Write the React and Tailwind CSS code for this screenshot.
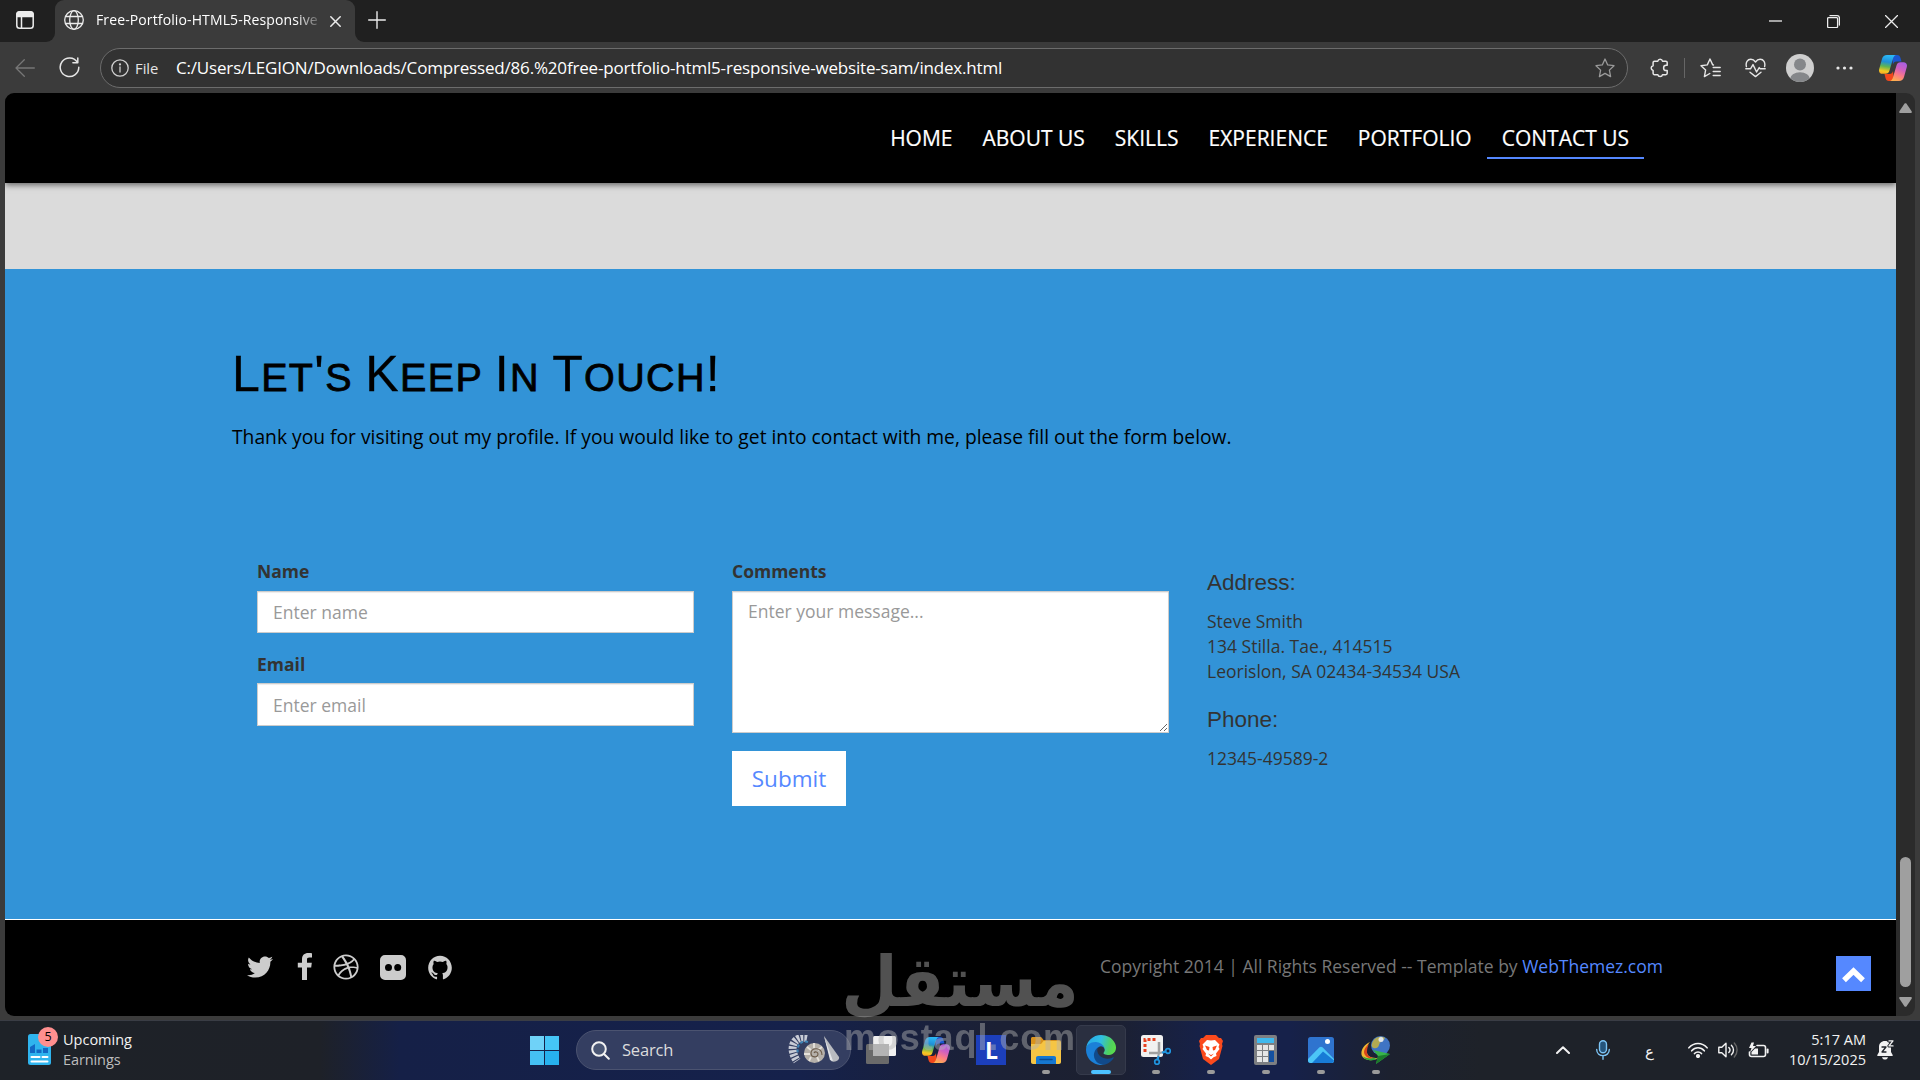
import React from "react";
import { FaTwitter, FaDribbble, FaFlickr } from "react-icons/fa";
import { IoLogoGithub } from "react-icons/io5";

const NAV = ["Home", "About Us", "Skills", "Experience", "Portfolio", "Contact Us"];

function Svg({ w, h = w, box, className = "", children, ...rest }) {
  return (
    <svg
      width={w}
      height={h}
      viewBox={box || `0 0 ${w} ${h}`}
      fill="none"
      stroke="currentColor"
      strokeWidth="1.3"
      strokeLinecap="round"
      strokeLinejoin="round"
      className={`block shrink-0 ${className}`}
      {...rest}
    >
      {children}
    </svg>
  );
}

function Copilot({ id, w = 28, h = 26 }) {
  return (
    <svg width={w} height={h} viewBox="0 0 28 26" className="block shrink-0">
      <defs>
        <linearGradient id={`${id}a`} x1="0.4" y1="0" x2="0.25" y2="1">
          <stop offset="0" stopColor="#2bb8f5" />
          <stop offset="0.35" stopColor="#1f8fd8" />
          <stop offset="0.6" stopColor="#5fb551" />
          <stop offset="0.85" stopColor="#f5c822" />
          <stop offset="1" stopColor="#f7a823" />
        </linearGradient>
        <linearGradient id={`${id}b`} x1="0.7" y1="0" x2="0.3" y2="1">
          <stop offset="0" stopColor="#a95fe0" />
          <stop offset="0.35" stopColor="#d060c0" />
          <stop offset="0.65" stopColor="#fb7a86" />
          <stop offset="1" stopColor="#fcb04e" />
        </linearGradient>
      </defs>
      <path d="M13 0h5c2 0 3 1.200 3.500 3l1 3.500h-5c-2 0-3 1-3.500 3z" fill="#1b56d0" />
      <path d="M15 26h-5c-2 0-3-1.200-3.500-3l-1-4h5c2 0 3-1 3.500-3z" fill="#f2481c" />
      <path d="M8 0h9c-1.800.6-2.500 2-3.100 4l-3.400 11.500c-.7 2.300-1.900 3.300-4 3.300H3.500C1 18.800-.5 17 .2 14L3 4C3.700 1.600 5.500 0 8 0z" fill={`url(#${id}a)`} />
      <path d="M20 26h-9c1.800-.6 2.500-2 3.100-4l3.400-11.500c.7-2.300 1.900-3.300 4-3.300h3c2.500 0 4 1.800 3.300 4.800L25 22c-.7 2.400-2.500 4-5 4z" fill={`url(#${id}b)`} />
    </svg>
  );
}

function TabBar() {
  return (
    <div className="flex h-[42px] shrink-0 items-end bg-[#202020] text-[#ececec]">
      <div className="flex h-[42px] w-[55px] items-center bg-[#3b3b3b]">
        <div className="flex h-full w-full items-center rounded-br-[9px] bg-[#202020] pb-[2px] pl-4">
          <Svg w={18} strokeWidth="1.5">
            <rect x="0.800" y="0.800" width="16.400" height="16.400" rx="2.800" />
            <path d="M1 3.600C1 2 2 1 3.600 1h10.800C16 1 17 2 17 3.600V5.400H1z" fill="currentColor" />
            <path d="M5.500 5v12" />
          </Svg>
        </div>
      </div>
      <div className="flex h-[42px] w-[300px] items-center rounded-t-[9px] bg-[#3b3b3b] pb-[2px] pl-[9px]">
        <Svg w={20}>
          <circle cx="10" cy="10" r="9.300" />
          <ellipse cx="10" cy="10" rx="4.300" ry="9.300" />
          <path d="M1.600 6.500h16.800M1.600 13.500h16.800" />
        </Svg>
        <div className="ml-[12px] w-[226px] overflow-hidden whitespace-nowrap text-[14px] leading-5 tracking-[0.12px] text-white [mask-image:linear-gradient(to_right,black_200px,transparent_228px)]">
          Free-Portfolio-HTML5-Responsive
        </div>
        <Svg w={11} className="ml-[8px] mt-[2px]" strokeWidth="1.5">
          <path d="M0.800 0.800l9.400 9.400M10.200 0.800l-9.400 9.400" />
        </Svg>
      </div>
      <div className="flex h-[42px] flex-1 items-center bg-[#3b3b3b]">
        <div className="flex h-full w-full items-center rounded-bl-[9px] bg-[#202020] pb-[3px]">
          <Svg w={18} className="ml-[13px]" strokeWidth="1.4">
            <path d="M9 0.700v16.600M0.700 9h16.600" />
          </Svg>
          <div className="ml-auto flex items-center gap-[45px] pr-[22px] pt-[3px]">
            <Svg w={13}>
              <path d="M0 6h13" strokeLinecap="butt" />
            </Svg>
            <Svg w={13}>
              <rect x="0.600" y="2.600" width="10" height="10" rx="1" />
              <path d="M3 0.700h7.200c1.300 0 2.200.9 2.200 2.200V10" />
            </Svg>
            <Svg w={13}>
              <path d="M0.500 0.500l12 12M12.500 0.500l-12 12" />
            </Svg>
          </div>
        </div>
      </div>
    </div>
  );
}

const STAR = "M10 1l2.700 5.900 6.300.8-4.600 4.400 1.200 6.500L10 15.400l-5.600 3.200 1.200-6.500L1 7.700l6.300-.8z";

function Toolbar() {
  return (
    <div className="flex h-[51px] shrink-0 items-center bg-[#3b3b3b] text-[#e6e6e6]">
      <Svg w={20} h={18} className="ml-[15px] text-[#777]">
        <path d="M19.300 9H1M9.300 0.800L1 9l8.300 8.200" />
      </Svg>
      <Svg w={21} className="ml-[24px] mr-px" strokeWidth="1.5">
        <path d="M18.300 5.200A9.300 9.300 0 1 0 19.800 10.300" />
        <path d="M18.800 0.900v4.900h-4.900" />
      </Svg>
      <div className="ml-[19px] flex h-10 w-[1528px] items-center rounded-full border border-[#6c6c6c] bg-[#323232] pl-[10px]">
        <Svg w={18} className="text-[#d0d0d0]">
          <circle cx="9" cy="9" r="8.200" />
          <path d="M9 8v5" />
          <circle cx="9" cy="5.400" r="0.500" fill="currentColor" />
        </Svg>
        <span className="ml-[6px] w-[41px] text-[14.800px] leading-5 text-[#e4e4e4]">File</span>
        <span className="whitespace-nowrap text-[17px] leading-6 tracking-[-0.18px] text-white">
          C:/Users/LEGION/Downloads/Compressed/86.%20free-portfolio-html5-responsive-website-sam/index.html
        </span>
        <Svg w={20} className="ml-auto mr-3 text-[#9a9a9a]">
          <path d={STAR} />
        </Svg>
      </div>
      <Svg w={19} h={20} className="ml-[22px]" strokeWidth="1.500">
        <path d="M4.500 3.200h3.300a2.400 2.400 0 0 1 4.700 0h3.300c.8 0 1.400.6 1.400 1.400v2.700h-1a2.600 2.600 0 0 0 0 5.200h1v2.800c0 .8-.6 1.400-1.400 1.400h-3.300a2.400 2.400 0 0 1-4.700 0H4.500c-.8 0-1.400-.6-1.400-1.400v-2.900a2.400 2.400 0 0 1 0-4.700V4.600c0-.8.6-1.400 1.400-1.400z" />
      </Svg>
      <div className="ml-[15px] h-5 w-px bg-[#666]" />
      <Svg w={21} h={20} className="ml-[15px]" strokeWidth="1.400">
        <path d="M13.500 7L12.700 6.900 10 1 7.300 6.900 1 7.700l4.600 4.400-1.200 6.500L9.800 15.500" />
        <path d="M13.200 9.500h7M13.200 13.500h7M13.200 17.500h7" />
      </Svg>
      <Svg w={21} h={20} className="ml-[24px]" strokeWidth="1.400">
        <path d="M1.400 8.600C.4 4.500 2.500 1.300 5.800 1.300c2 0 3.500 1 4.700 2.700 1.200-1.700 2.700-2.700 4.700-2.700 3.300 0 5.400 3.200 4.400 7.300" />
        <path d="M0.800 10.800h4.700L8 6.600l3.600 7.400 2.600-4.400 1 1.200h5" />
        <path d="M5 14.200l5.500 4.400 5.500-4.400" />
      </Svg>
      <Svg w={28} className="ml-[20px]" stroke="none">
        <defs>
          <clipPath id="avatar"><circle cx="14" cy="14" r="14" /></clipPath>
        </defs>
        <circle cx="14" cy="14" r="14" fill="#cfcfcf" />
        <g clipPath="url(#avatar)" fill="#85878a">
          <circle cx="14" cy="10.500" r="6" />
          <ellipse cx="14" cy="25" rx="10" ry="6.800" />
        </g>
      </Svg>
      <Svg w={17} h={4} className="ml-[22px]" stroke="none">
        <g fill="#e6e6e6">
          <circle cx="2" cy="2" r="1.600" />
          <circle cx="8.500" cy="2" r="1.600" />
          <circle cx="15" cy="2" r="1.600" />
        </g>
      </Svg>
      <div className="ml-[26px]"><Copilot id="cpA" /></div>
    </div>
  );
}

function SiteHeader() {
  return (
    <header className="relative z-10 flex h-[90px] shrink-0 items-start justify-end bg-black pr-[252px] pt-[30px] shadow-[0_2px_6px_rgba(0,0,0,0.55)]">
      {NAV.map((label) => (
        <a
          key={label}
          className={`border-b-2 px-[15px] pb-[4px] text-[21px] uppercase leading-[30px] text-white [-webkit-text-stroke:0.2px_white] ${
            label === "Contact Us" ? "border-[#5588ff]" : "border-transparent"
          }`}
        >
          {label}
        </a>
      ))}
    </header>
  );
}

const CAPS = [["L", "et"], ["'", "s "], ["K", "eep "], ["I", "n "], ["T", "ouch"], ["!", ""]];
const FIELD =
  "block w-[437px] border border-[#ccc] bg-white px-[15px] text-[17.500px] leading-[25px] text-[#999] placeholder-[#999] outline-none shadow-[inset_0_1px_1px_rgba(0,0,0,0.075)]";

function Contact() {
  return (
    <section className="h-[650px] shrink-0 bg-[#3293d7] pl-[226px] pt-[78px] text-[17.500px] leading-[25px] text-[#333]">
      <h1 className="whitespace-pre pl-px font-['Liberation_Sans',Arial,sans-serif] text-[50px] uppercase leading-[55px] tracking-[1.350px] text-black [-webkit-text-stroke:0.3px_black]">
        {CAPS.map(([big, small]) => (
          <React.Fragment key={big}>
            {big}
            <span className="text-[39.500px] leading-none [-webkit-text-stroke:0.8px_black]">{small}</span>
          </React.Fragment>
        ))}
      </h1>
      <p className="mt-[21px] pl-px text-[19.250px] leading-[28px] text-black">
        Thank you for visiting out my profile. If you would like to get into contact with me, please fill out the form below.
      </p>
      <div className="mt-[108px] flex gap-[38px] pl-[26px]">
        <div>
          <label className="block font-bold">Name</label>
          <input className={`${FIELD} mt-[7px] h-[42px]`} placeholder="Enter name" />
          <label className="mt-[19px] block font-bold">Email</label>
          <input className={`${FIELD} mt-[6px] h-[43px]`} placeholder="Enter email" />
        </div>
        <div>
          <label className="block font-bold">Comments</label>
          <textarea className={`${FIELD} mt-[7px] h-[142px] resize-y py-[7px]`} placeholder="Enter your message..." />
          <button className="mt-[18px] block h-[55px] w-[114px] bg-white text-[22.500px] text-[#5588ff]">Submit</button>
        </div>
        <div className="pt-[11px]">
          <h3 className="font-['Liberation_Sans',Arial,sans-serif] text-[22.500px]">Address:</h3>
          <p className="mt-[14px]">
            Steve Smith
            <br />
            134 Stilla. Tae., 414515
            <br />
            Leorislon, SA 02434-34534 USA
          </p>
          <h3 className="mt-[23px] font-['Liberation_Sans',Arial,sans-serif] text-[22.500px]">Phone:</h3>
          <p className="mt-[14px]">12345-49589-2</p>
        </div>
      </div>
    </section>
  );
}

function Footer() {
  return (
    <footer className="relative flex h-[97px] shrink-0 items-start border-t border-white bg-black text-[17.500px] leading-[25px]">
      <div className="ml-[242px] mt-[33px] flex h-[28px] items-center text-[#ccc]">
        <FaTwitter className="h-[26px] w-[26px]" />
        <svg viewBox="0 0 15 27" className="mb-[2px] ml-[24px] h-[27px] w-[15px]" fill="currentColor">
          <path d="M15 .2v4.300h-2.600C10.400 4.500 10 5.400 10 6.800v3h4.800l-.6 4.700H10V27H5V14.500H.8V9.800H5V6.200C5 2.200 7.500 0 11.200 0c1.700 0 3.300.1 3.800.2z" />
        </svg>
        <FaDribbble className="ml-[21px] h-[26px] w-[26px]" />
        <svg viewBox="0 0 26 25" className="ml-[21px] h-[25px] w-[26px]" fill="currentColor" fillRule="evenodd">
          <path d="M5 0h16a5 5 0 0 1 5 5v15a5 5 0 0 1-5 5H5a5 5 0 0 1-5-5V5a5 5 0 0 1 5-5zM8.500 9a3.500 3.500 0 1 0 0 7 3.500 3.500 0 0 0 0-7zM17.700 9a3.500 3.500 0 1 0 0 7 3.500 3.500 0 0 0 0-7z" />
        </svg>
        <IoLogoGithub className="ml-[20px] h-[27px] w-[28px]" />
      </div>
      <p className="ml-auto mr-[233px] mt-[34px] whitespace-pre text-[#777]">
        Copyright 2014 | All Rights Reserved -- Template by <a className="text-[#5588ff]">WebThemez.com</a>
      </p>
      <a className="absolute right-[25px] top-[36px] flex h-[35px] w-[35px] items-center justify-center bg-[#5588ff] pt-[2px]">
        <svg width="23" height="16" viewBox="0 0 23 16" className="block">
          <path d="M2 13.300l9.500-9.300 9.500 9.300" stroke="#fff" strokeWidth="5.400" fill="none" />
        </svg>
      </a>
    </footer>
  );
}

function Scrollbar() {
  return (
    <div className="flex w-[19px] flex-col items-center rounded-r-[9px] bg-[#2b2b2b] pt-[10px] text-[#9f9f9f]">
      <Svg w={13} h={10} stroke="none">
        <path d="M5.600.6c.5-.6 1.300-.6 1.800 0l5.200 7.600c.5.900.1 1.800-.9 1.800H1.300C.3 10-.1 9.100.4 8.200z" fill="#9f9f9f" />
      </Svg>
      <div className="mt-auto h-[130px] w-[11px] rounded-full bg-[#9f9f9f]" />
      <Svg w={13} h={10} stroke="none" className="mb-[9px] mt-[10px]">
        <path d="M5.600 9.400c.5.600 1.300.6 1.800 0l5.200-7.600C13.100.9 12.700 0 11.700 0H1.300C.3 0-.1.900.4 1.800z" fill="#9f9f9f" />
      </Svg>
    </div>
  );
}

function Widgets() {
  return (
    <div className="relative">
      <svg width="23" height="31" viewBox="0 0 23 31" className="block">
        <rect width="23" height="31" rx="2.500" fill="#2fb4ee" />
        <path d="M2 13l5-3v9H2zM8.500 15.500h5V19h-5zM15 14h5v5h-5z" fill="#1268c4" />
        <path d="M3.500 23h8M14.500 23h5M3.500 27.500h16" stroke="#fff" strokeWidth="2" strokeLinecap="round" />
      </svg>
      <div className="absolute -right-[7px] -top-[7px] flex h-[20px] w-[20px] items-center justify-center rounded-full bg-[#ff8f8f] text-[12.500px] leading-none text-black">
        5
      </div>
    </div>
  );
}

function SeaShells() {
  return (
    <svg width="54" height="30" viewBox="0 0 54 30" className="block">
      <path d="M20 3C10 1 4 8 6 17c.6 3 2 6 4 9" stroke="#c8ccd6" strokeWidth="8" strokeDasharray="2.600 1.100" fill="none" />
      <path d="M21 7C14 5 9 10 11 19" stroke="#3f83b5" strokeWidth="2" strokeDasharray="3 2" fill="none" />
      <ellipse cx="27.500" cy="18" rx="10.500" ry="10" fill="#b5b0aa" />
      <path d="M20 12l4 3M27 8v5M35 12l-4 3M17 19h6M22 26l2-4M32 26l-2-4" stroke="#e6e2dc" strokeWidth="1.800" />
      <path d="M27 18c1-2 4-1 4 1 0 4-7 4-7-1 0-6 11-6 11 2" stroke="#6b5a48" strokeWidth="1.100" fill="none" />
      <path d="M37 1l15 21c1 3-4 6-8 4z" fill="#b9bbc0" />
      <path d="M37 1l9 25-3-1z" fill="#e4e5e8" />
    </svg>
  );
}

function EdgeIcon() {
  return (
    <svg width="30" height="30" viewBox="4.600 4.900 256 256" className="block">
      <defs>
        <linearGradient id="edgeTop" x1="0" y1="0.400" x2="1" y2="0.600">
          <stop offset="0" stopColor="#27a9e8" />
          <stop offset="0.450" stopColor="#30bfe3" />
          <stop offset="0.800" stopColor="#4fd060" />
          <stop offset="1" stopColor="#5bdc4a" />
        </linearGradient>
      </defs>
      <path d="M235.680 195.460a93.730 93.730 0 0 1-10.540 4.710 101.870 101.870 0 0 1-35.900 6.460c-47.320 0-88.540-32.550-88.540-74.320A31.480 31.480 0 0 1 117.130 105c-42.800 1.800-53.800 46.400-53.800 72.530 0 73.880 68.090 81.370 82.760 81.370 7.910 0 19.840-2.300 27-4.560l1.310-.44a128.340 128.340 0 0 0 66.600-52.800 4 4 0 0 0-5.320-5.640z" fill="#114a8b" />
      <path d="M110.340 246.340A79.200 79.200 0 0 1 87.600 225a80.720 80.720 0 0 1 29.530-120c3.120-1.470 8.450-4.130 15.540-4a32.350 32.350 0 0 1 25.690 13 31.880 31.880 0 0 1 6.360 18.660c0-.21 24.460-79.600-80-79.600-43.900 0-80 41.660-80 78.210a130.150 130.150 0 0 0 12.110 56 128 128 0 0 0 156.380 67.110 75.550 75.550 0 0 1-62.780-8z" fill="#1b80d8" />
      <path d="M156.940 153.780c-.81 1.050-3.300 2.500-3.300 5.660 0 2.610 1.700 5.120 4.720 7.230 14.380 10 41.490 8.680 41.560 8.680a59.560 59.560 0 0 0 30.270-8.350 61.380 61.380 0 0 0 30.430-52.880c.26-22.410-8-37.310-11.340-43.910C228.090 28.760 182.350 4.920 132.610 4.920a128 128 0 0 0-128 126.200c.48-36.540 36.800-66.050 80-66.050 3.500 0 23.460.34 42 10.070 16.340 8.580 24.900 18.940 30.850 29.210 6.180 10.670 7.280 24.150 7.280 29.520s-2.740 13.330-7.800 19.910z" fill="url(#edgeTop)" />
    </svg>
  );
}

const TASKS = [
  {
    icon: (
      <svg width="30" height="28" viewBox="0 0 30 28" className="block">
        <rect x="0" y="8" width="23" height="20" rx="1.500" fill="#6a6a6a" />
        <rect x="7" y="0" width="23" height="20" rx="1.500" fill="#f0f0f0" />
        <rect x="7" y="8" width="16" height="12" fill="#b4b4b4" />
      </svg>
    ),
  },
  { icon: <Copilot id="cpB" /> },
  {
    icon: (
      <div className="flex h-[30px] w-[30px] items-center justify-center bg-[#1c3fbb] pl-[2px] text-[23px] font-bold leading-none text-white">
        L
      </div>
    ),
  },
  {
    open: true,
    icon: (
      <svg width="30" height="27" viewBox="0 0 30 27" className="block">
        <path d="M0 1.500C0 .7.700 0 1.500 0H9c1 0 1.500.3 2 1l1.500 2H28c1.200 0 2 .8 2 2v6H0z" fill="#d9931e" />
        <path d="M0 7h10l2.500-3H28c1.200 0 2 .8 2 2v19c0 1.200-.8 2-2 2H2c-1.200 0-2-.8-2-2z" fill="#f6c544" />
        <path d="M5 27v-6c0-1.200.8-2 2-2h16c1.200 0 2 .8 2 2v6z" fill="#1678d2" />
        <path d="M9 22.500h12" stroke="#0c4b93" strokeWidth="1.500" strokeLinecap="round" />
      </svg>
    ),
  },
  { active: true, icon: <EdgeIcon /> },
  {
    open: true,
    icon: (
      <svg width="30" height="30" viewBox="0 0 30 30" className="block">
        <rect width="22" height="22" rx="2.500" fill="#f1f1f1" />
        <path d="M4 17V4.500h12.500" stroke="#e8401f" strokeWidth="3" strokeDasharray="3 2" fill="none" />
        <path d="M18 7v12M8 18h11" stroke="#a0a0a0" strokeWidth="2.500" />
        <path d="M18 18l-1.500 6M19 18l5-1.500" stroke="#9aa0a6" strokeWidth="2" />
        <circle cx="16" cy="27" r="2.300" stroke="#1f95e0" strokeWidth="1.700" fill="none" />
        <circle cx="27" cy="16" r="2.300" stroke="#1f95e0" strokeWidth="1.700" fill="none" />
        <path d="M16.500 25l1.200-4M25 16.500l-4 1.200" stroke="#1f95e0" strokeWidth="2" />
      </svg>
    ),
  },
  {
    open: true,
    icon: (
      <svg width="26" height="30" viewBox="0 0 26 30" className="block">
        <path d="M8 0h10l3 3h2l2 3-1 3 .5 2-3.500 13-8 6-8-6L1.500 11 2 9 1 6l2-3h2z" fill="#fb4a1d" />
        <path d="M13 5.500l4-.6 4.500 4.600-1 2.500 1 2-3.500 4.500.5 2.500-3 1.200L13 24.500l-2.500-2.300-3-1.200.5-2.500L4.500 14l1-2-1-2.500L9 4.900z" fill="#fff" />
        <path d="M7 10.500l4.500 1.500-.5 3.500-2-.5zM19 10.500L14.500 12l.5 3.500 2-.5zM10 18.500l3 1.500 3-1.500-3 3z" fill="#fb4a1d" />
      </svg>
    ),
  },
  {
    open: true,
    icon: (
      <svg width="23" height="30" viewBox="0 0 23 30" className="block">
        <rect width="23" height="30" rx="2" fill="#7d7f82" />
        <rect x="3" y="3" width="17" height="5" fill="#3fb9ee" />
        <g fill="#e6e6e6">
          <rect x="3" y="10" width="5" height="5" /><rect x="9" y="10" width="5" height="5" /><rect x="15" y="10" width="5" height="5" />
          <rect x="3" y="16" width="5" height="5" /><rect x="9" y="16" width="5" height="5" />
          <rect x="3" y="22" width="5" height="5" /><rect x="9" y="22" width="5" height="5" />
        </g>
        <rect x="15" y="16" width="5" height="11" fill="#1450a0" />
      </svg>
    ),
  },
  {
    open: true,
    icon: (
      <svg width="26" height="26" viewBox="0 0 26 26" className="block">
        <rect width="26" height="26" rx="2.500" fill="#2f74cf" />
        <path d="M0 22L11.500 10.300c.9-.9 2.100-.9 3 0L26 22v1.500c0 1.500-1 2.500-2.500 2.500h-21C1 26 0 25 0 23.500z" fill="#4cc6f7" />
        <path d="M4 26l11-11.500 11 9c0 1.500-1 2.500-2.500 2.500z" fill="#187bd6" />
        <circle cx="19.500" cy="4.500" r="2.500" fill="#fff" />
      </svg>
    ),
  },
  {
    open: true,
    icon: (
      <svg width="30" height="28" viewBox="0 0 30 28" className="block">
        <circle cx="19.500" cy="9.500" r="9.500" fill="#3f74c4" />
        <path d="M12 5c3-5 9-5 12-3-2 4-5 3-6 7s-5 4-7 2c-.8-2 0-4 1-6z" fill="#b3aa52" />
        <circle cx="20" cy="3.500" r="2.500" fill="#dfe6ee" />
        <path d="M9 6C2 9-1 16 1 20s9 6 16 2c-6 0-10-1-11-5s0-8 3-11z" fill="#f2b632" />
        <path d="M8 8C3 12 2 16 4 19s6 4 9 3.500C8 21 6 19 6 16s.5-5 2-8z" fill="#d8441c" />
        <path d="M1 20c3 4 9 6 15 3l-3-1c-4 1-9 0-12-2z" fill="#2da83b" />
        <path d="M12 14l17 4-14 10 2-8z" fill="#37b54a" />
        <path d="M17 20l12-2-14 10z" fill="#1c7a2b" />
      </svg>
    ),
  },
];

function Taskbar() {
  return (
    <div className="flex h-[60px] w-full shrink-0 items-center border-t border-[#3a3d45] bg-[linear-gradient(to_right,#1e2228_0,#1e2128_320px,#152047_400px,#15214b_800px,#1b2034_1000px,#1c2030_1110px,#16214a_1210px,#16214a_1290px,#1c212f_1390px,#1e2229_1480px)] pb-px text-[#f2f2f2]">
      <div className="ml-[28px] mt-[-1px]"><Widgets /></div>
      <div className="ml-[12px] w-[467px] text-[14.500px] leading-[20px]">
        <div>Upcoming</div>
        <div className="tracking-[-0.100px] text-[#bdbdbd]">Earnings</div>
      </div>
      <div className="grid w-[29px] grid-cols-2 gap-px">
        <div className="h-[14px] bg-[#6fd2f8]" />
        <div className="h-[14px] bg-[#45c5f7]" />
        <div className="h-[14px] bg-[#45c0f3]" />
        <div className="h-[14px] bg-[#27b1ee]" />
      </div>
      <div className="ml-[17px] flex h-10 w-[275px] items-center rounded-full border border-[#4b5370] bg-[#343e61] pl-[14px]">
        <Svg w={19} strokeWidth="2">
          <circle cx="8" cy="8" r="6.800" fill="#4a5674" />
          <path d="M13 13l4.800 4.800" />
        </Svg>
        <span className="ml-3 text-[16.500px] leading-6 tracking-[-0.200px] text-[#dcdcdc]">Search</span>
        <div className="ml-auto mr-[9px]"><SeaShells /></div>
      </div>
      <div className="ml-[2px] flex">
        {TASKS.map((t, i) => (
          <div key={i} className="flex w-[55px] justify-center">
            <div
              className={`relative flex h-[50px] w-[50px] items-center justify-center rounded-[5px] ${
                t.active ? "border border-[#353a4b] bg-[#2a2f40]" : ""
              }`}
            >
              {t.icon}
              {t.active && <div className="absolute bottom-0 h-1 w-5 rounded-full bg-[#4cc2ff]" />}
              {t.open && <div className="absolute bottom-[1px] h-1 w-2 rounded-full bg-[#9a9a9a]" />}
            </div>
          </div>
        ))}
      </div>
      <Svg w={14} h={8} className="ml-[153px]" strokeWidth="2">
        <path d="M1 7l6-5.800L13 7" />
      </Svg>
      <Svg w={14} h={20} className="ml-[26px] text-[#7cc4f5]" strokeWidth="1.400">
        <rect x="3.500" y="0.700" width="7" height="12" rx="3.500" fill="#25557c" />
        <path d="M0.700 9.500c0 8.200 12.600 8.200 12.600 0M7 15.800v3.500" />
      </Svg>
      <span className="ml-[35px] mt-[4px] w-[11px] font-['DejaVu_Sans',sans-serif] text-[15px] leading-5">ع</span>
      <Svg w={20} h={16} className="ml-[32px]" strokeWidth="1.600">
        <path d="M0.900 5.800c5-5.700 13.200-5.700 18.200 0M3.700 8.800c3.500-4 9.100-4 12.600 0M6.500 11.600c1.900-2.200 5.100-2.200 7 0" />
        <circle cx="10" cy="14" r="1.300" fill="currentColor" />
      </Svg>
      <Svg w={20} h={16} className="ml-[10px]" strokeWidth="1.400">
        <path d="M0.800 5.300h3L8 1.200v13.600l-4.200-4.100h-3z" />
        <path d="M10.800 5.500c1.400 1.400 1.400 3.600 0 5M13.400 3.200c2.800 2.800 2.800 6.800 0 9.600" />
        <path d="M16.300 1c3.700 4 3.700 10 0 14" stroke="#666" />
      </Svg>
      <Svg w={21} h={17} className="ml-[10px]" strokeWidth="1.600">
        <path d="M9 3.500h6.500c1.300 0 2 .7 2 2v7c0 1.300-.7 2-2 2h-12c-1.300 0-2-.7-2-2V10" />
        <path d="M19.600 7.500v3" strokeWidth="2" />
        <path d="M7 6.500h3v6H3.500V10z" fill="currentColor" stroke="none" />
        <path d="M3.500 0.500L1 6h2.500L2 10.500 8 4H5l1-3.500z" fill="currentColor" stroke="none" />
      </Svg>
      <div className="ml-auto mr-[11px] text-right text-[14.500px] leading-[20px]">
        <div>5:17 AM</div>
        <div>10/15/2025</div>
      </div>
      <Svg w={17} h={20} className="mr-[26px]" stroke="none">
        <path d="M8 1C4.300 1 2 3.500 2 7v5L.3 15c-.2.600.1 1 .7 1h14c.6 0 .9-.4.700-1L14 12V7c0-3.500-2.300-6-6-6zM5 17.200h6c-.4 1.500-1.500 2.400-3 2.400s-2.600-.9-3-2.400z" fill="#f2f2f2" />
        <path d="M5 7h4l-4 5h4" stroke="#1e2229" strokeWidth="1.300" />
        <path d="M12 0.900h4l-4 5h4" stroke="#1e2229" strokeWidth="3.200" />
        <path d="M12 0.900h4l-4 5h4" stroke="#f2f2f2" strokeWidth="1.300" />
      </Svg>
    </div>
  );
}

function Watermark() {
  return (
    <div className="pointer-events-none absolute left-[845px] top-[940px] z-20 h-[130px] w-[230px] text-[#b4b4b4] opacity-45">
      <div className="flex h-[82px] w-[230px] items-center justify-center">
        <span dir="rtl" className="block origin-center scale-y-[1.080] whitespace-nowrap font-['DejaVu_Sans',sans-serif] text-[65px] font-bold leading-none">
          مستقل
        </span>
      </div>
      <div className="-ml-px -mt-[5px] whitespace-nowrap font-['Liberation_Sans',Arial,sans-serif] text-[36px] font-bold leading-[41px] tracking-[0.900px]">
        mostaql.com
      </div>
    </div>
  );
}

export default function App() {
  return (
    <div className="relative flex h-[1080px] w-[1920px] flex-col overflow-hidden bg-[#3b3b3b] font-['Open_Sans','Noto_Sans',sans-serif]">
      <TabBar />
      <Toolbar />
      <div className="flex h-[923px] shrink-0 px-[5px]">
        <main className="flex w-[1891px] flex-col overflow-hidden rounded-bl-[9px] rounded-tl-[9px]">
          <SiteHeader />
          <div className="h-[86px] shrink-0 bg-[#dbdbdb]" />
          <Contact />
          <Footer />
        </main>
        <Scrollbar />
      </div>
      <div className="h-[4px] shrink-0" />
      <Taskbar />
      <Watermark />
    </div>
  );
}
